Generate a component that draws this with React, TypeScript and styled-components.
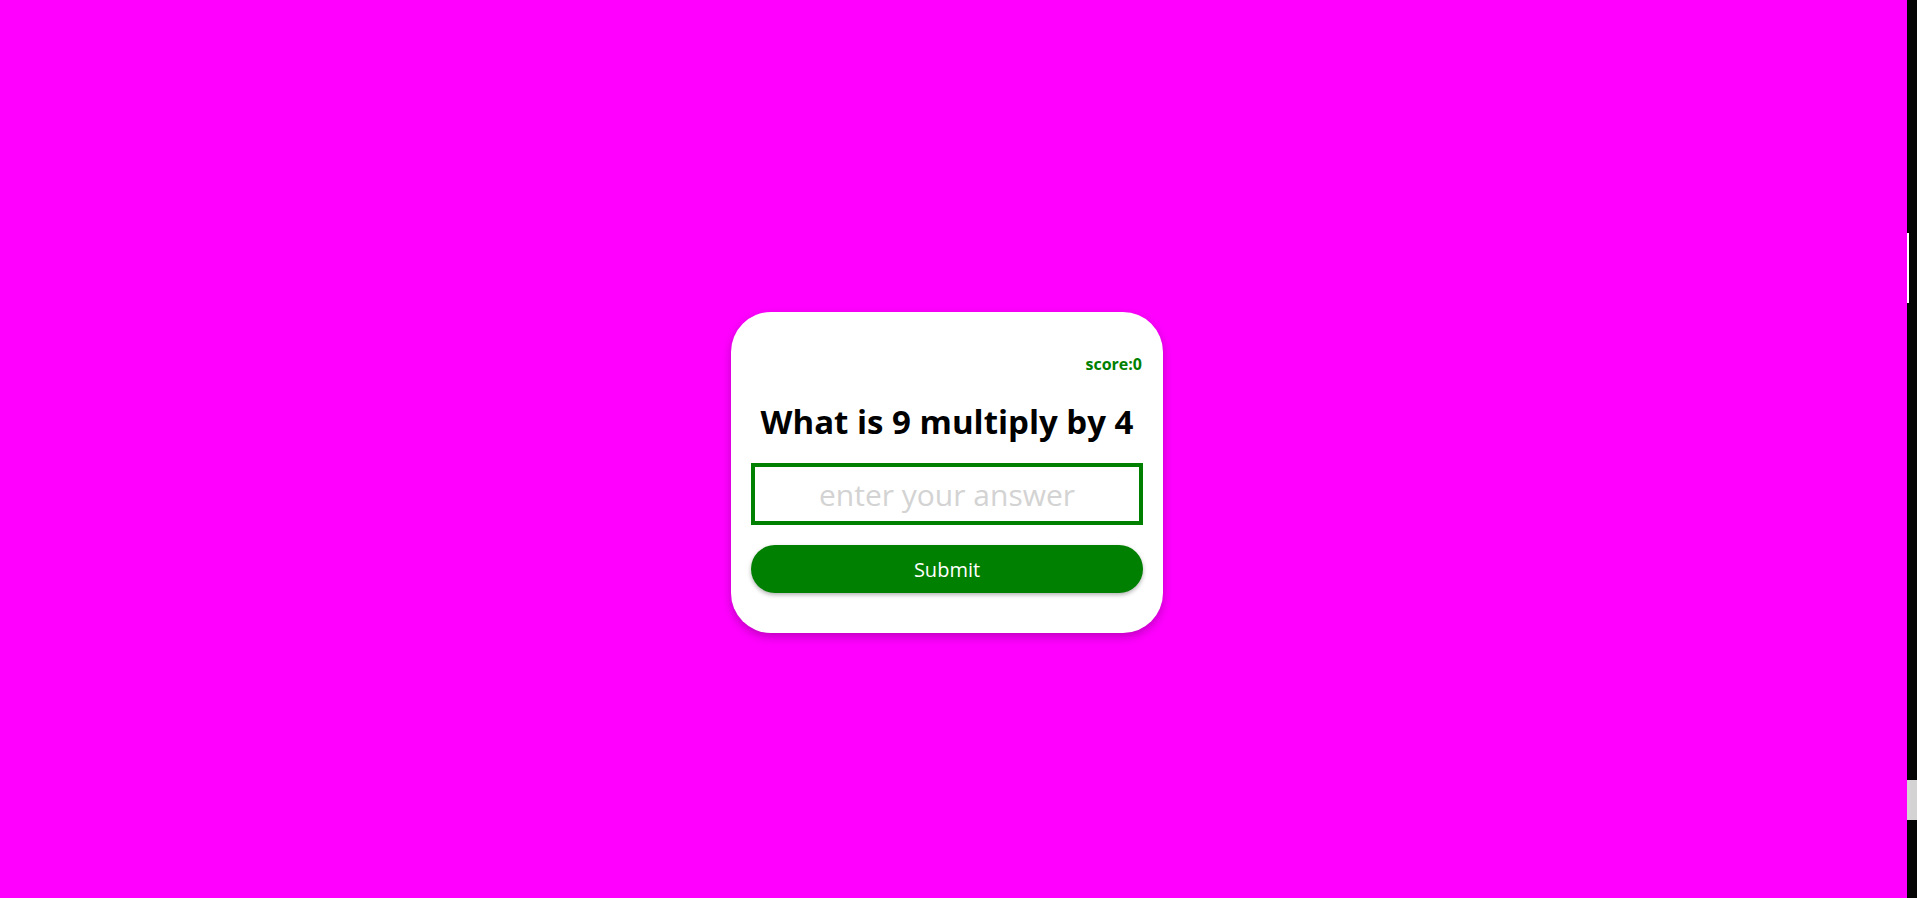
import React from "react";
import styled, { createGlobalStyle } from "styled-components";

const Global = createGlobalStyle`
  html, body { margin: 0; padding: 0; height: 100%; }
  body { background: #ff00ff; overflow: hidden; font-family: "Comic Sans MS", "Open Sans", sans-serif; }
  #root { height: 100%; }
`;

const Page = styled.div`
  display: flex;
  height: 898px;
  width: 1917px;
`;

const Main = styled.main`
  flex: 1;
  display: flex;
  justify-content: center;
  align-items: flex-start;
  padding: 312px 13px 0 0;
  background: #ff00ff;
`;

const Track = styled.div`
  width: 10px;
  background: #050505;
  display: flex;
  flex-direction: column;
`;

const Gap = styled.div<{ $h: number }>`
  height: ${(p) => p.$h}px;
  flex: none;
`;

const Line = styled.div`
  width: 2px;
  height: 70px;
  background: #ffffff;
`;

const Thumb = styled.div`
  width: 10px;
  height: 40px;
  background: #d3d3d3;
`;

const Card = styled.div`
  width: 432px;
  box-sizing: border-box;
  background: #ffffff;
  border-radius: 40px;
  padding: 43px 20px 40px 20px;
  box-shadow: 0 4px 10px rgba(0, 0, 0, 0.25);
  display: flex;
  flex-direction: column;
`;

const Score = styled.div`
  align-self: flex-end;
  margin-right: 1px;
  color: #008000;
  font-family: "Comic Sans MS", "Open Sans", sans-serif;
  font-weight: 700;
  font-size: 16px;
  line-height: 18px;
`;

const Heading = styled.h1`
  margin: 27px 0 0 0;
  text-align: center;
  white-space: nowrap;
  color: #000;
  font-family: "Comic Sans MS", "Open Sans", sans-serif;
  font-weight: 700;
  font-size: 33px;
  line-height: 44px;
  height: 44px;
`;

const Input = styled.input`
  margin-top: 19px;
  width: 100%;
  height: 62px;
  box-sizing: border-box;
  border: 4px solid #008000;
  outline: none;
  text-align: center;
  font-family: "Comic Sans MS", "Open Sans", sans-serif;
  font-size: 30px;
  background: #fff;
  &::placeholder { color: #d3d3d3; }
`;

const Button = styled.button`
  margin-top: 20px;
  width: 100%;
  height: 48px;
  border: none;
  border-radius: 24px;
  background: #008000;
  color: #ffffff;
  font-family: "Comic Sans MS", "Open Sans", sans-serif;
  font-size: 20px;
  box-shadow: 0 2px 4px rgba(0, 0, 0, 0.3);
  cursor: pointer;
`;

export default function App() {
  return (
    <>
      <Global />
      <Page>
        <Main>
          <Card>
            <Score>score:0</Score>
            <Heading>What is 9 multiply by 4</Heading>
            <Input placeholder="enter your answer" />
            <Button>Submit</Button>
          </Card>
        </Main>
        <Track>
          <Gap $h={233} />
          <Line />
          <Gap $h={477} />
          <Thumb />
        </Track>
      </Page>
    </>
  );
}
